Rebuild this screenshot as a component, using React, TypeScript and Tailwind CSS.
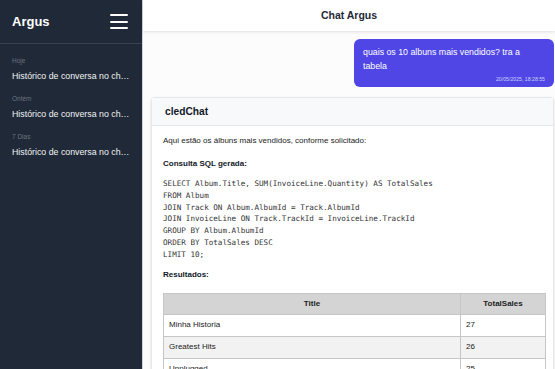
import React from "react";

const history = [
  { label: "Hoje", title: "Histórico de conversa no chat Argus" },
  { label: "Ontém", title: "Histórico de conversa no chat Argus" },
  { label: "7 Dias", title: "Histórico de conversa no chat Argus" },
];

const sql = `SELECT Album.Title, SUM(InvoiceLine.Quantity) AS TotalSales
FROM Album
JOIN Track ON Album.AlbumId = Track.AlbumId
JOIN InvoiceLine ON Track.TrackId = InvoiceLine.TrackId
GROUP BY Album.AlbumId
ORDER BY TotalSales DESC
LIMIT 10;`;

const rows = [
  { title: "Minha Historia", total: 27 },
  { title: "Greatest Hits", total: 26 },
  { title: "Unplugged", total: 25 },
  { title: "Acústico", total: 22 },
];

function Sidebar() {
  return (
    <aside className="flex h-full w-[143px] shrink-0 flex-col border-r border-[#d1d5db] bg-[#1f2937]">
      <div className="flex h-[44px] items-center justify-between border-b border-[#374151] pl-[12px] pr-[14px]">
        <span className="text-[13px] font-bold text-white">Argus</span>
        {/* hamburger */}
        <div className="flex w-[18px] flex-col gap-[4.3px]">
          <span className="h-[2px] w-full rounded-full bg-white" />
          <span className="h-[2px] w-full rounded-full bg-white" />
          <span className="h-[2px] w-full rounded-full bg-white" />
        </div>
      </div>
      <div className="flex flex-col gap-3 px-[12px] pt-[12px]">
        {history.map((h) => (
          <div key={h.label} className="flex flex-col">
            <span className="text-[6.5px] leading-[10px] text-[#6b7280]">{h.label}</span>
            <span className="mt-[4px] truncate text-[8.8px] leading-[12px] text-[#f3f4f6]">
              {h.title}
            </span>
          </div>
        ))}
      </div>
    </aside>
  );
}

function UserBubble() {
  return (
    <div className="flex justify-end">
      <div className="w-[200px] rounded-[6px] bg-[#4f46e5] pb-[4px] pl-[9px] pr-[9px] pt-[7px] text-white">
        <p className="text-[8.8px] leading-[13.5px]">quais os 10 albuns mais vendidos? tra a tabela</p>
        <p className="mt-[2px] text-right text-[5.2px] leading-[8px] text-[#c7d2fe]">20/05/2025, 18:28:55</p>
      </div>
    </div>
  );
}

function BotCard() {
  return (
    <div className="rounded-[4px] border border-[#e5e7eb] bg-white shadow-sm">
      <div className="flex h-[28px] items-center border-b border-[#e5e7eb] bg-[#f8f9fa] pl-[13px]">
        <span className="text-[10.2px] font-bold text-[#111827]">cledChat</span>
      </div>
      <div className="px-[11px] pt-[9px] text-[8px] text-[#222222]">
        <p className="leading-[12px]">Aqui estão os álbuns mais vendidos, conforme solicitado:</p>
        <p className="mt-[11px] font-bold leading-[12px] text-[#111827]">Consulta SQL gerada:</p>
        <pre className="mt-[8px] font-['DejaVu_Sans_Mono',monospace] text-[7.6px] leading-[11.8px] text-[#333333]">
          {sql}
        </pre>
        <p className="mt-[8px] font-bold leading-[12px] text-[#111827]">Resultados:</p>
        <table className="mr-[6px] mt-3 w-[383px] border-collapse text-[8px]">
          <thead>
            <tr className="h-[21px] bg-[#d4d4d4]">
              <th className="border border-[#c6c6c6] font-bold text-[#222222]">Title</th>
              <th className="w-[85px] border border-[#c6c6c6] font-bold text-[#222222]">TotalSales</th>
            </tr>
          </thead>
          <tbody>
            {rows.map((r, i) => (
              <tr key={r.title} className={i % 2 === 1 ? "h-[22px] bg-[#f2f2f2]" : "h-[22px] bg-white"}>
                <td className="border border-[#c6c6c6] pl-[5px]">{r.title}</td>
                <td className="border border-[#c6c6c6] pl-[5px]">{r.total}</td>
              </tr>
            ))}
          </tbody>
        </table>
      </div>
    </div>
  );
}

export default function App() {
  return (
    <div className="flex h-[369px] w-[555px] overflow-hidden bg-white font-['Liberation_Sans',Arial,sans-serif]">
      <Sidebar />
      <main className="flex min-w-0 flex-1 flex-col bg-[#fcfcfc]">
        <header className="relative z-10 flex h-[31px] shrink-0 items-center justify-center bg-white shadow-[0_1px_3px_rgba(0,0,0,0.12)]">
          <span className="text-[10.5px] font-bold text-[#1f2937]">Chat Argus</span>
        </header>
        <div className="flex flex-col gap-[10px] overflow-hidden pl-[8px] pr-[1px] pt-[8px]">
          <UserBubble />
          <BotCard />
        </div>
      </main>
    </div>
  );
}
